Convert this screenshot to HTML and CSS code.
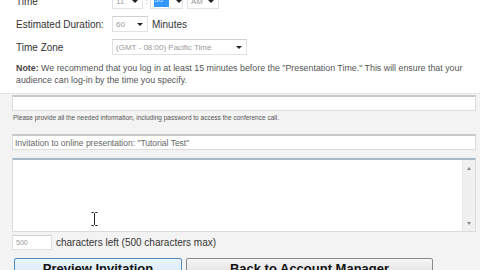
FILE: index.html
```html
<!DOCTYPE html>
<html>
<head>
<meta charset="utf-8">
<link rel="stylesheet" href="styles.css">
</head>
<body>
<div class="top">
  <div class="row r1">
    <span class="label">Time</span>
    <div class="sel w31"><span class="val">11</span><span class="arr"></span></div>
    <span class="colon">:</span>
    <div class="sel w33"><span class="val hl">30</span><span class="arr"></span></div>
    <div class="sel w32 ml4"><span class="val">AM</span><span class="arr"></span></div>
  </div>
  <div class="row">
    <span class="label">Estimated Duration:</span>
    <div class="sel w36"><span class="val">60</span><span class="arr"></span></div>
    <span class="unit">Minutes</span>
  </div>
  <div class="row">
    <span class="label">Time Zone</span>
    <div class="sel w135"><span class="val">(GMT - 08:00) Pacific Time</span><span class="arr"></span></div>
  </div>
  <p class="note"><b>Note:</b> We recommend that you log in at least 15 minutes before the "Presentation Time." This will ensure that your audience can log-in by the time you specify.</p>
</div>
<div class="panel">
  <div class="input"></div>
  <p class="hint">Please provide all the needed information, including password to access the conference call.</p>
  <div class="input"><span class="itext">Invitation to online presentation: "Tutorial Test"</span></div>
  <div class="textarea">
    <div class="tbody"></div>
    <div class="scroll">
      <span class="sarr up"></span>
      <span class="sarr down"></span>
    </div>
    <svg class="ibeam" width="7" height="14" viewBox="0 0 7 14"><path d="M0.5 0.5h2l1 1 1-1h2M3.5 1.5v11M0.5 13.5h2l1-1 1 1h2" fill="none" stroke="#222" stroke-width="1"/></svg>
  </div>
  <div class="counter">
    <div class="cbox">500</div>
    <span class="ctext">characters left (500 characters max)</span>
  </div>
  <div class="buttons">
    <div class="btn b1">Preview Invitation</div>
    <div class="btn b2">Back to Account Manager</div>
  </div>
</div>
</body>
</html>
```
FILE: styles.css
```css
html, body {
  margin: 0;
  padding: 0;
  background: #ffffff;
  font-family: "Liberation Sans", Arial, sans-serif;
  color: #333333;
  overflow: hidden;
  width: 480px;
  height: 270px;
}
.top {
  display: flow-root;
  padding-left: 16px;
  height: 93px;
  box-sizing: border-box;
}
.row {
  display: flex;
  align-items: center;
  height: 16px;
  margin-bottom: 7px;
  font-size: 10px;
}
.r1 {
  margin-top: -7px;
}
.label {
  width: 96px;
  flex: none;
  color: #333;
}
.sel {
  height: 16px;
  box-sizing: border-box;
  border: 1px solid #e2e2e2;
  border-top-color: #cfcfcf;
  background: #fff;
  display: flex;
  align-items: center;
  padding-left: 3px;
  padding-right: 4px;
  font-size: 8px;
  color: #9a9a9a;
}
.sel .val {
  flex: 1;
  white-space: nowrap;
}
.sel .arr {
  width: 0;
  height: 0;
  border-left: 3px solid transparent;
  border-right: 3px solid transparent;
  border-top: 3px solid #222;
}
.hl {
  background: #3399ff;
  color: #cfe6ff;
  flex: none !important;
  width: 15px;
  height: 12px;
  margin-right: 7px;
}
.w31 { width: 31px; }
.w33 { width: 33px; }
.w32 { width: 32px; }
.w36 { width: 36px; }
.w135 { width: 135px; }
.ml4 { margin-left: 4px; }
.colon {
  width: 7px;
  text-align: center;
  color: #999;
  font-size: 8px;
}
.unit {
  margin-left: 4px;
}
.note {
  margin: 0;
  font-size: 8.85px;
  line-height: 12px;
  color: #555;
  width: 456px;
}
.note b {
  color: #444;
}
.panel {
  background: #f3f3f3;
  border-top: 1px solid #e4e4e4;
  padding: 1px 4px 0 12px;
  height: 177px;
  box-sizing: border-box;
}
.input {
  height: 16px;
  box-sizing: border-box;
  background: #fff;
  border: 1px solid #dcdcdc;
  border-top: 2px solid #c8c8c8;
  font-size: 8.5px;
  color: #666;
  display: flex;
  align-items: center;
  padding-left: 2px;
}
.hint {
  margin: 0;
  height: 23px;
  line-height: 14px;
  font-size: 6.5px;
  color: #555;
  padding-left: 1px;
}
.textarea {
  height: 74px;
  box-sizing: border-box;
  background: #fff;
  border: 1px solid #dcdcdc;
  border-top: 2px solid #a9b9c8;
  display: flex;
  position: relative;
  margin-top: 8px;
}
.tbody {
  flex: 1;
}
.scroll {
  width: 12px;
  background: #f0f0f0;
  border-left: 1px solid #e6e6e6;
  display: flex;
  flex-direction: column;
  justify-content: space-between;
  align-items: center;
  padding: 7px 0 6px;
}
.sarr {
  width: 0;
  height: 0;
  border-left: 2.5px solid transparent;
  border-right: 2.5px solid transparent;
}
.sarr.up { border-bottom: 3px solid #888; }
.sarr.down { border-top: 3px solid #888; }
.ibeam {
  position: absolute;
  left: 78px;
  top: 52px;
}
.counter {
  display: flex;
  align-items: center;
  margin-top: 2px;
  height: 16px;
}
.cbox {
  width: 40px;
  height: 15px;
  box-sizing: border-box;
  background: #fff;
  border: 1px solid #e0e0e0;
  border-top-color: #cfcfcf;
  font-size: 7px;
  color: #999;
  padding-left: 3px;
  line-height: 13px;
}
.ctext {
  margin-left: 4px;
  font-size: 10px;
  color: #333;
}
.buttons {
  display: flex;
  margin-top: 8px;
  padding-left: 2px;
}
.btn {
  height: 20px;
  box-sizing: border-box;
  border: 1px solid #8a8a8a;
  border-radius: 2px;
  background: linear-gradient(#f6f6f6, #dddddd);
  font-weight: bold;
  font-size: 13px;
  color: #111;
  text-align: center;
  line-height: 18px;
  padding-top: 1px;
}
.b1 {
  width: 168px;
  border-color: #4f8dc0;
  background: linear-gradient(#eaf4fb, #d6e8f5);
}
.b2 {
  width: 247px;
  margin-left: 4px;
}
```
